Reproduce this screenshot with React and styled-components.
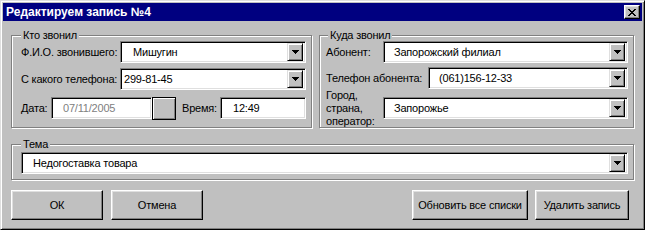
import React from "react";
import styled, { createGlobalStyle } from "styled-components";

const GlobalStyle = createGlobalStyle`
  html, body {
    margin: 0;
    padding: 0;
    background: #c0c0c0;
  }
  body {
    font-family: "Liberation Sans", Arial, sans-serif;
    font-size: 11px;
    letter-spacing: -0.2px;
    color: #000;
  }
  * {
    box-sizing: border-box;
  }
`;

const Window = styled.div`
  width: 645px;
  height: 230px;
  background: #c0c0c0;
  border: 1px solid;
  border-color: #dfdfdf #000 #000 #dfdfdf;
  box-shadow: inset 1px 1px #fff, inset -1px -1px #808080;
  padding: 2px;
  display: flex;
  flex-direction: column;
`;

const TitleBar = styled.div`
  height: 18px;
  flex: none;
  background: #000080;
  color: #fff;
  display: flex;
  align-items: center;
  justify-content: space-between;
  padding: 0 2px 0 3px;
`;

const Title = styled.span`
  font-weight: bold;
  font-size: 12px;
  letter-spacing: 0;
  white-space: nowrap;
`;

const CloseButton = styled.div`
  width: 16px;
  height: 14px;
  background: #c0c0c0;
  border: 1px solid;
  border-color: #fff #000 #000 #fff;
  box-shadow: inset -1px -1px #808080, inset 1px 1px #dfdfdf;
  display: flex;
  align-items: center;
  justify-content: center;
`;

const Body = styled.div`
  padding: 8px 8px 0 8px;
  display: flex;
  flex-direction: column;
`;

const TopRow = styled.div`
  display: flex;
  gap: 7px;
`;

const Group = styled.fieldset`
  margin: 0;
  min-width: 0;
  width: ${(p) => p.$w}px;
  border: 1px solid #808080;
  box-shadow: inset 1px 1px #fff, 1px 1px #fff;
  padding: ${(p) => p.$pad};
  margin-top: ${(p) => p.$mt || 0}px;
`;

const Legend = styled.legend`
  padding: 0 2px;
  margin-left: ${(p) => p.$offset || 0}px;
  line-height: 12px;
  font-size: 11px;
  background: #c0c0c0;
`;

const Row = styled.div`
  display: flex;
  align-items: center;
  height: 22px;
  margin-top: ${(p) => p.$mt || 0}px;
`;

const Label = styled.span`
  flex: none;
  width: ${(p) => p.$w}px;
  margin-left: ${(p) => p.$ml || 0}px;
  white-space: ${(p) => (p.$wrap ? "normal" : "nowrap")};
  line-height: 13px;
`;

const Field = styled.div`
  height: 22px;
  flex: ${(p) => (p.$w ? "none" : "1")};
  width: ${(p) => (p.$w ? `${p.$w}px` : "auto")};
  min-width: 0;
  background: #fff;
  border: 1px solid;
  border-color: #808080 #fff #fff #808080;
  box-shadow: inset 1px 1px #000, inset -1px -1px #dfdfdf;
  display: flex;
  align-items: center;
  padding: 2px;
  color: ${(p) => (p.$muted ? "#808080" : "#000")};
`;

const FieldText = styled.span`
  flex: 1;
  padding-left: ${(p) => p.$indent}px;
  white-space: nowrap;
  overflow: hidden;
`;

const ArrowButton = styled.div`
  flex: none;
  width: 16px;
  height: 18px;
  background: #c0c0c0;
  border: 1px solid;
  border-color: #dfdfdf #000 #000 #dfdfdf;
  box-shadow: inset 1px 1px #fff, inset -1px -1px #808080;
  display: flex;
  align-items: center;
  justify-content: center;
`;

const PickButton = styled.div`
  flex: none;
  align-self: flex-start;
  width: 24px;
  height: 23px;
  background: #c0c0c0;
  border: 1px solid #000;
  box-shadow: inset 1px 1px #fff, inset -1px -1px #808080;
`;

const ButtonRow = styled.div`
  display: flex;
  align-items: center;
  margin-top: 10px;
  padding-right: 5px;
`;

const Button = styled.div`
  width: ${(p) => p.$w}px;
  height: 30px;
  margin-left: ${(p) => p.$ml || 0}px;
  background: #c0c0c0;
  border: 1px solid;
  border-color: #fff #000 #000 #fff;
  box-shadow: inset -1px -1px #808080, inset 1px 1px #dfdfdf;
  display: flex;
  align-items: center;
  justify-content: center;
  white-space: nowrap;
`;

const Spacer = styled.div`
  flex: 1;
`;

function DownArrow() {
  return (
    <svg width="7" height="4" viewBox="0 0 7 4" shapeRendering="crispEdges">
      <rect x="0" y="0" width="7" height="1" fill="#000" />
      <rect x="1" y="1" width="5" height="1" fill="#000" />
      <rect x="2" y="2" width="3" height="1" fill="#000" />
      <rect x="3" y="3" width="1" height="1" fill="#000" />
    </svg>
  );
}

function CloseGlyph() {
  const rows = [
    [0, 1, 6, 7],
    [1, 2, 5, 6],
    [2, 3, 4, 5],
    [3, 4],
    [2, 3, 4, 5],
    [1, 2, 5, 6],
    [0, 1, 6, 7],
  ];
  return (
    <svg width="8" height="7" viewBox="0 0 8 7" shapeRendering="crispEdges">
      {rows.map((cols, y) =>
        cols.map((x) => (
          <rect key={`${x}-${y}`} x={x} y={y} width="1" height="1" fill="#000" />
        ))
      )}
    </svg>
  );
}

function Combo({ value, indent = 10, w }) {
  return (
    <Field $w={w}>
      <FieldText $indent={indent}>{value}</FieldText>
      <ArrowButton>
        <DownArrow />
      </ArrowButton>
    </Field>
  );
}

export default function App() {
  return (
    <>
      <GlobalStyle />
      <Window>
        <TitleBar>
          <Title>Редактируем запись №4</Title>
          <CloseButton>
            <CloseGlyph />
          </CloseButton>
        </TitleBar>

        <Body>
          <TopRow>
            <Group $w={301} $pad="0 5px 8px 9px">
              <Legend>Кто звонил</Legend>
              <Row>
                <Label $w={99}>Ф.И.О. звонившего:</Label>
                <Combo value="Мишугин" indent={10} />
              </Row>
              <Row $mt={5}>
                <Label $w={99}>С какого телефона:</Label>
                <Combo value="299-81-45" indent={1} />
              </Row>
              <Row $mt={7}>
                <Label $w={30}>Дата:</Label>
                <Field $w={101} $muted>
                  <FieldText $indent={9}>07/11/2005</FieldText>
                </Field>
                <PickButton />
                <Label $w={38} $ml={6}>Время:</Label>
                <Field>
                  <FieldText $indent={10}>12:49</FieldText>
                </Field>
              </Row>
            </Group>

            <Group $w={315} $pad="0 5px 8px 6px">
              <Legend $offset={2}>Куда звонил</Legend>
              <Row>
                <Label $w={57}>Абонент:</Label>
                <Combo value="Запорожский филиал" indent={8} />
              </Row>
              <Row $mt={4}>
                <Label $w={102}>Телефон абонента:</Label>
                <Combo value="(061)156-12-33" indent={8} />
              </Row>
              <Row $mt={8}>
                <Label $w={57} $wrap>
                  Город,
                  <br />
                  страна,
                  <br />
                  оператор:
                </Label>
                <Combo value="Запорожье" indent={8} />
              </Row>
            </Group>
          </TopRow>

          <Group $w={623} $pad="2px 5px 5px 9px" $mt={10}>
            <Legend>Тема</Legend>
            <Row>
              <Combo value="Недогоставка товара" indent={9} />
            </Row>
          </Group>

          <ButtonRow>
            <Button $w={92}>ОК</Button>
            <Button $w={92} $ml={8}>
              Отмена
            </Button>
            <Spacer />
            <Button $w={116}>Обновить все списки</Button>
            <Button $w={94} $ml={7}>
              Удалить запись
            </Button>
          </ButtonRow>
        </Body>
      </Window>
    </>
  );
}
